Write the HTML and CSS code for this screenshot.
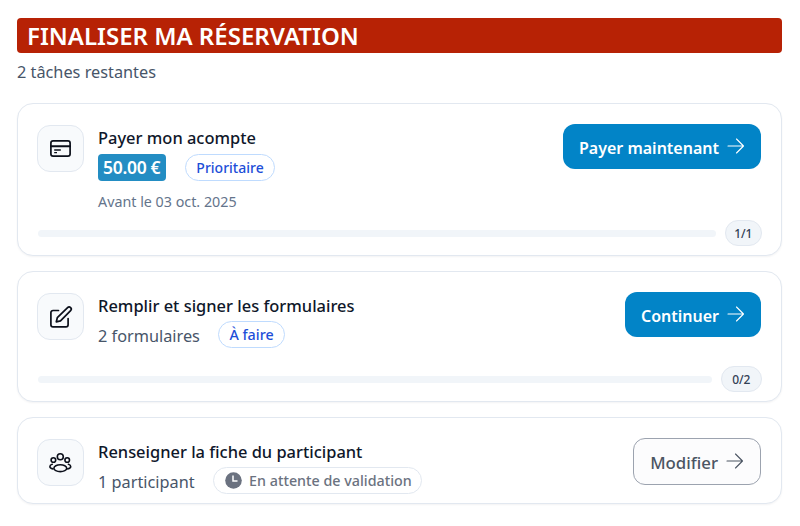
FILE: index.html
```html
<!DOCTYPE html>
<html lang="fr">
<head>
    <meta charset="UTF-8">
    <meta name="viewport" content="width=device-width, initial-scale=1.0">
    <title>Finaliser ma réservation</title>
    <link rel="stylesheet" href="styles.css">
</head>
<body>
    <div class="banner">FINALISER MA RÉSERVATION</div>
    <p class="remaining">2 tâches restantes</p>

    <div class="card">
        <div class="card-top">
            <div class="icon-box">
                <svg width="25" height="25" viewBox="0 0 25 25" fill="none" stroke="#0b0f1a" stroke-width="1.7" stroke-linecap="round" stroke-linejoin="round">
                    <rect x="2.9" y="4.9" width="19.2" height="15.2" rx="2.2"/>
                    <path d="M3 10.2h19" stroke-width="2"/>
                    <path d="M6.2 14h6.6M6.2 16.6h2.8" stroke-width="1.4" stroke-linecap="butt"/>
                </svg>
            </div>
            <div class="info">
                <div class="title">Payer mon acompte</div>
                <div class="meta meta-first">
                    <span class="price">50.00 €</span>
                    <span class="tag tag-blue tag-prio">Prioritaire</span>
                </div>
                <div class="deadline">Avant le 03 oct. 2025</div>
            </div>
            <a class="btn btn-primary">Payer maintenant
                <svg class="arrow" width="20" height="20" viewBox="0 0 20 20" fill="none" stroke="currentColor" stroke-width="1.1" stroke-linecap="round" stroke-linejoin="round"><path d="M2 10h15.5M10.5 3l7 7-7 7"/></svg>
            </a>
        </div>
        <div class="progress progress-first">
            <div class="bar"></div>
            <span class="count">1/1</span>
        </div>
    </div>

    <div class="card">
        <div class="card-top">
            <div class="icon-box">
                <svg width="25" height="25" viewBox="0 0 25 25" fill="none" stroke="#0b0f1a" stroke-width="1.7" stroke-linecap="round" stroke-linejoin="round">
                    <path d="M10.5 6.5H5a2.1 2.1 0 0 0-2.1 2.1v12.2A2.1 2.1 0 0 0 5 22.9h13a2.1 2.1 0 0 0 2.1-2.1v-6.3"/>
                    <path d="M19.6 3.6a2.1 2.1 0 0 1 3 3L12.5 16.8l-4.2 1 1-4.1z"/>
                </svg>
            </div>
            <div class="info">
                <div class="title">Remplir et signer les formulaires</div>
                <div class="meta">
                    <span class="sub">2 formulaires</span>
                    <span class="tag tag-blue">À faire</span>
                </div>
            </div>
            <a class="btn btn-primary">Continuer
                <svg class="arrow" width="20" height="20" viewBox="0 0 20 20" fill="none" stroke="currentColor" stroke-width="1.1" stroke-linecap="round" stroke-linejoin="round"><path d="M2 10h15.5M10.5 3l7 7-7 7"/></svg>
            </a>
        </div>
        <div class="progress">
            <div class="bar"></div>
            <span class="count count-wide">0/2</span>
        </div>
    </div>

    <div class="card">
        <div class="card-top">
            <div class="icon-box">
                <svg width="25" height="25" viewBox="0 0 25 25" fill="none" stroke="#0b0f1a" stroke-width="1.6" stroke-linecap="round" stroke-linejoin="round">
                    <circle cx="12.3" cy="6.7" r="3"/>
                    <circle cx="5.4" cy="10" r="2.3"/>
                    <circle cx="19.2" cy="10" r="2.3"/>
                    <ellipse cx="12.3" cy="18.2" rx="6.4" ry="3.4"/>
                    <path d="M4.2 14.2C2.6 14.6 1.9 15.6 1.9 16.5c0 1.2 1.1 2.1 3 2.4M20.4 14.2c1.6.4 2.3 1.4 2.3 2.3 0 1.2-1.1 2.1-3 2.4"/>
                </svg>
            </div>
            <div class="info">
                <div class="title">Renseigner la fiche du participant</div>
                <div class="meta">
                    <span class="sub">1 participant</span>
                    <span class="tag tag-grey">
                        <svg width="17" height="17" viewBox="0 0 17 17"><circle cx="8.5" cy="8.5" r="8.3" fill="#6b7280"/><path d="M8 3.5V9h4.5" fill="none" stroke="#fff" stroke-width="1.5"/></svg>
                        En attente de validation
                    </span>
                </div>
            </div>
            <a class="btn btn-outline">Modifier
                <svg class="arrow" width="20" height="20" viewBox="0 0 20 20" fill="none" stroke="currentColor" stroke-width="1.1" stroke-linecap="round" stroke-linejoin="round"><path d="M2 10h15.5M10.5 3l7 7-7 7"/></svg>
            </a>
        </div>
    </div>
</body>
</html>
```

FILE: styles.css
```css
body {
    font-family: "Noto Sans", sans-serif;
    margin: 0;
    padding: 18px 18px 0 17px;
    background: #fff;
    color: #0f172a;
    overflow: hidden;
}
.banner {
    background: #b72205;
    color: #fff;
    font-size: 24px;
    font-weight: 600;
    line-height: 35px;
    height: 35px;
    padding-left: 10px;
    border-radius: 4px;
}
.remaining {
    margin: 8px 0 20px;
    font-size: 16.3px;
    line-height: 22px;
    color: #475569;
}
.card {
    border: 1px solid #e2e8f0;
    border-radius: 16px;
    padding: 20px 20px 9px 19px;
    margin-bottom: 15px;
    background: #fff;
    box-shadow: 0 1px 2px rgba(15, 23, 42, 0.05);
}
.card-top {
    display: flex;
    align-items: flex-start;
}
.icon-box {
    width: 47px;
    height: 47px;
    flex: none;
    box-sizing: border-box;
    margin-top: 1px;
    border: 1px solid #e2e8f0;
    border-radius: 13px;
    background: #f8fafc;
    display: flex;
    align-items: center;
    justify-content: center;
}
.info {
    flex: 1;
    margin-left: 14px;
    padding-top: 1px;
}
.title {
    font-size: 16.45px;
    font-weight: 500;
    line-height: 26px;
}
.meta {
    display: flex;
    align-items: center;
    gap: 18.5px;
    height: 27px;
    margin-top: 2px;
}
.meta-first {
    gap: 19px;
    margin-top: 3px;
}
.sub {
    font-size: 16.3px;
    color: #475569;
    margin-top: 2px;
}
.price {
    background: #238dc3;
    color: #fff;
    font-size: 17.5px;
    font-weight: 600;
    line-height: 27px;
    padding: 0 6px 0 5px;
    border-radius: 4px;
    letter-spacing: -0.3px;
}
.tag {
    display: inline-flex;
    align-items: center;
    height: 27px;
    box-sizing: border-box;
    border-radius: 14px;
    font-size: 14.3px;
    font-weight: 500;
    padding: 0 10px;
}
.tag-blue {
    color: #1d4ed8;
    border: 1px solid #bfdbfe;
}
.tag-prio {
    font-size: 14px;
}
.tag-grey {
    color: #6b7280;
    border: 1px solid #e2e8f0;
    gap: 7px;
    padding: 0 9px 0 11px;
}
.deadline {
    font-size: 14.3px;
    color: #64748b;
    line-height: 20px;
    margin-top: 11px;
}
.btn {
    display: flex;
    align-items: center;
    gap: 7px;
    flex: none;
    box-sizing: border-box;
    height: 45px;
    padding: 2px 15px 0 16px;
    border-radius: 12px;
    font-size: 16px;
    font-weight: 600;
}
.arrow {
    margin-top: -3px;
}
.btn-primary {
    background: #0284c7;
    color: #fff;
}
.btn-outline {
    height: 47px;
    background: #fcfcfd;
    border: 1px solid #9ca3af;
    color: #4b5563;
    font-size: 16.8px;
    font-weight: 500;
}
.progress {
    display: flex;
    align-items: center;
    gap: 9px;
    margin: 18px -1px 0 0;
    padding-left: 1px;
}
.progress-first {
    margin-top: 8px;
}
.bar {
    flex: 1;
    height: 7px;
    background: #f1f5f9;
    border-radius: 4px;
}
.count {
    box-sizing: border-box;
    height: 26px;
    line-height: 25px;
    padding: 0 8.5px;
    font-size: 12px;
    font-weight: 500;
    color: #334155;
    background: #f1f5f9;
    border: 1px solid #e2e8f0;
    border-radius: 13px;
}
.count-wide {
    padding: 0 10.5px;
}
```
